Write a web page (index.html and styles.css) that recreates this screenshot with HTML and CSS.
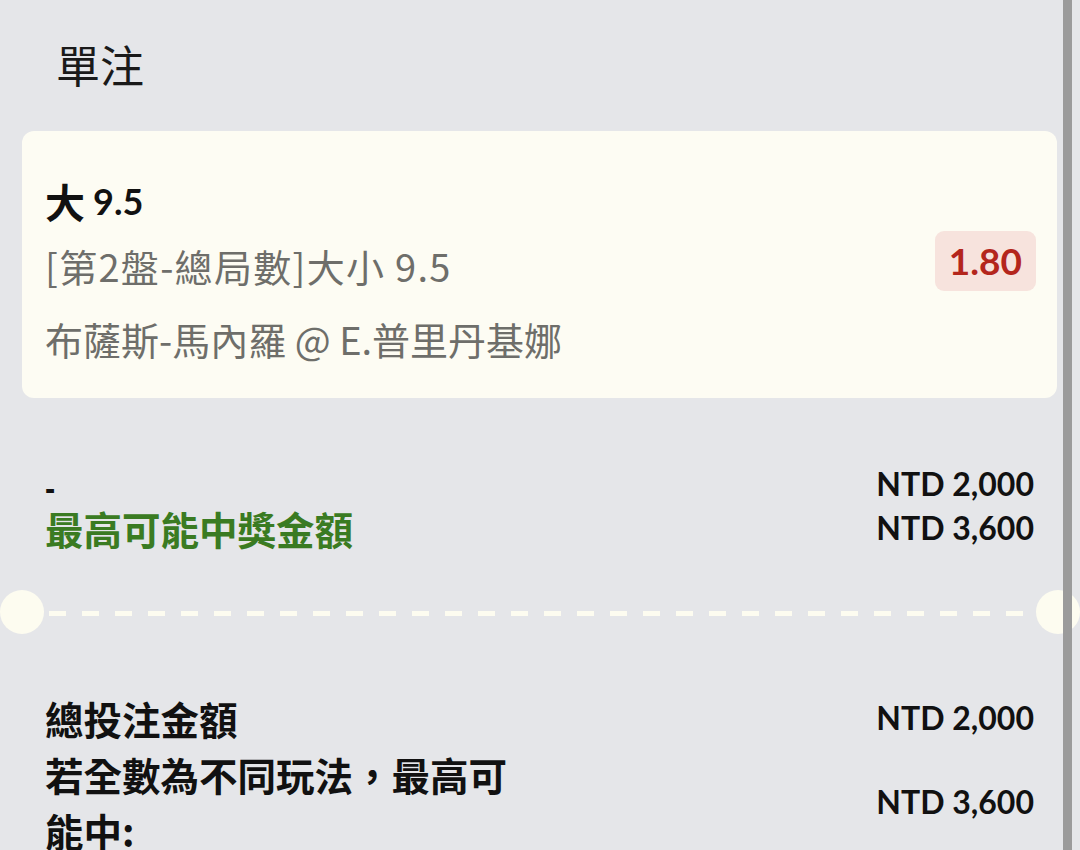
FILE: index.html
```html
<!DOCTYPE html>
<html lang="zh-Hant">
<head>
<meta charset="utf-8">
<title>單注</title>
<link rel="stylesheet" href="styles.css">
</head>
<body>
<div class="page">
  <header class="title">單注</header>

  <section class="bet-card">
    <div class="bet-info">
      <div class="bet-pick">大 <span class="lat">9.5</span></div>
      <div class="bet-market">[第2盤-總局數]大小 9.5</div>
      <div class="bet-match">布薩斯-馬內羅 @ E.普里丹基娜</div>
    </div>
    <div class="odds">1.80</div>
  </section>

  <section class="summary first">
    <div class="row">
      <div class="label"><span class="dash">-</span></div>
      <div class="value">NTD 2,000</div>
    </div>
    <div class="row">
      <div class="label green">最高可能中獎金額</div>
      <div class="value">NTD 3,600</div>
    </div>
  </section>

  <div class="divider"><div class="dashes"></div></div>

  <section class="summary second">
    <div class="row tall">
      <div class="label">總投注金額</div>
      <div class="value">NTD 2,000</div>
    </div>
    <div class="row tall">
      <div class="label wrap">若全數為不同玩法，最高可能中:</div>
      <div class="value">NTD 3,600</div>
    </div>
  </section>
</div>
<div class="scrollbar"></div>
</body>
</html>
```

FILE: styles.css
```css
* { box-sizing: border-box; }

html, body {
  margin: 0;
  padding: 0;
}

body {
  background: #e5e6e9;
  font-family: "Noto Sans CJK TC", "Noto Sans", sans-serif;
  color: #111;
  width: 1080px;
  height: 850px;
  overflow: hidden;
}

.page {
  padding: 0 23px 0 22px;
}

.lat {
  font-family: "Lato", "Noto Sans CJK TC", sans-serif;
}

.title {
  height: 131px;
  display: flex;
  align-items: center;
  padding-left: 34px;
  padding-bottom: 4px;
  font-size: 44px;
  font-weight: 400;
  color: #1a1a1a;
}

.bet-card {
  height: 267px;
  background: #fdfcf3;
  border-radius: 12px;
  padding: 0 21px 0 23px;
  display: flex;
  align-items: center;
  justify-content: space-between;
}

.bet-info {
  align-self: flex-start;
  display: flex;
  flex-direction: column;
  padding-top: 42px;
}

.bet-pick {
  height: 56px;
  display: flex;
  align-items: center;
  gap: 8px;
  font-size: 40px;
  font-weight: 700;
  color: #111;
}

.bet-pick .lat {
  font-size: 36px;
}

.bet-market {
  font-size: 38px;
  line-height: 74px;
  letter-spacing: 1.3px;
  color: #6e6e6a;
}

.bet-match {
  font-size: 38px;
  line-height: 72px;
  color: #6e6e6a;
}

.odds {
  font-family: "Lato", sans-serif;
  font-weight: 700;
  font-size: 37px;
  color: #b4261c;
  background: #f7e3dd;
  border-radius: 9px;
  height: 60px;
  padding: 0 14px;
  display: flex;
  align-items: center;
  margin-bottom: 8px;
}

.summary {
  padding: 0 23px;
}

.summary.first {
  margin-top: 64px;
}

.summary.second {
  margin-top: 56px;
}

.row {
  display: flex;
  justify-content: space-between;
  align-items: center;
  height: 44px;
  line-height: 44px;
}

.row.tall {
  height: auto;
  min-height: 56px;
  line-height: 56px;
}

.label {
  font-size: 38.5px;
  font-weight: 700;
  color: #111;
}

.label .dash {
  font-family: "Liberation Sans", sans-serif;
  font-size: 34px;
  line-height: 40px;
  display: inline-block;
  transform: scaleX(0.9);
  transform-origin: left center;
}

.label.green {
  color: #3a7b22;
}

.label.wrap {
  width: 490px;
}

.value {
  font-family: "Lato", sans-serif;
  font-size: 32px;
  font-weight: 700;
  color: #111;
}

.divider {
  position: relative;
  height: 44px;
  margin-top: 40px;
  display: flex;
  align-items: center;
}

.divider::before,
.divider::after {
  content: "";
  position: absolute;
  top: 0;
  width: 44px;
  height: 44px;
  border-radius: 50%;
  background: #fdfcf0;
}

.divider::before { left: -22px; }
.divider::after { right: -23px; }

.dashes {
  flex: 1;
  margin: 3px 27px 0;
  height: 5px;
  background: repeating-linear-gradient(to right, #fdfcf0 0 17px, transparent 17px 33px);
}

.scrollbar {
  position: fixed;
  top: 0;
  bottom: 0;
  left: 1063px;
  width: 9px;
  background: #9b9b9b;
}
```
